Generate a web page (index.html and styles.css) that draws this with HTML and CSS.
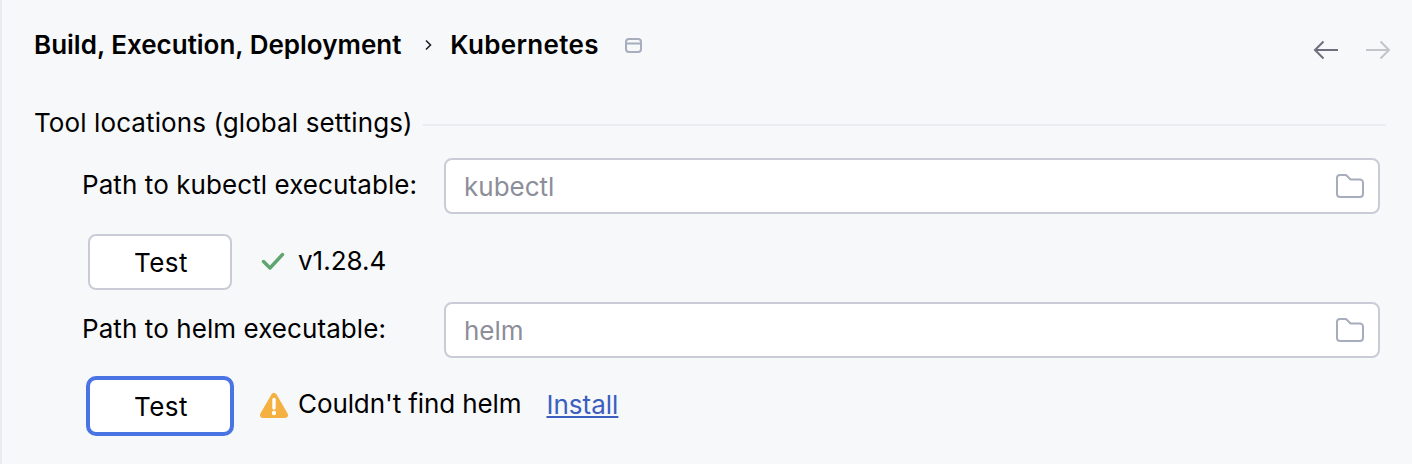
FILE: index.html
```html
<!DOCTYPE html>
<html lang="en">
<head>
<meta charset="utf-8">
<title>Kubernetes</title>
<link rel="stylesheet" href="styles.css">
</head>
<body>
<main class="panel">
  <header class="crumbs">
    <span class="crumb">Build, Execution, Deployment</span>
    <svg class="sep" width="10" height="14" viewBox="0 0 10 14"><path d="M3 2.500 7.500 7 3 11.500" fill="none" stroke="#1f2024" stroke-width="1.600"/></svg>
    <span class="crumb wide">Kubernetes</span>
    <svg class="win" width="20" height="16" viewBox="0 0 20 16"><rect x="2" y="2" width="15" height="13" rx="3" fill="none" stroke="#a8adbd" stroke-width="2"/><path d="M2 6.500h15" stroke="#a8adbd" stroke-width="2"/></svg>
    <nav class="nav">
      <svg width="26" height="22" viewBox="0 0 26 22"><path d="M25 11H2M10.500 2.500 2 11l8.500 8.500" fill="none" stroke="#6c707e" stroke-width="2"/></svg>
      <svg width="26" height="22" viewBox="0 0 26 22"><path d="M1 11h23M15.500 2.500 24 11l-8.500 8.500" fill="none" stroke="#c4c5c9" stroke-width="2"/></svg>
    </nav>
  </header>
  <div class="section"><span class="title">Tool locations (global settings)</span><i class="rule"></i></div>
  <div class="form">
    <div class="row">
      <label class="label">Path to kubectl executable:</label>
      <div class="field"><span class="hint">kubectl</span>
        <svg class="folder" width="30" height="26" viewBox="0 0 30 26"><path d="M2 5a3 3 0 0 1 3-3h6l4.500 4.500H25a3 3 0 0 1 3 3V21a3 3 0 0 1-3 3H5a3 3 0 0 1-3-3z" fill="none" stroke="#a8adbd" stroke-width="2"/></svg>
      </div>
    </div>
    <div class="status">
      <button class="btn">Test</button>
      <svg class="icon" width="26" height="22" viewBox="0 0 26 22"><path d="M3.500 10.500 10 17 22.500 3.500" fill="none" stroke="#5fa56f" stroke-width="3.400" stroke-linecap="round" stroke-linejoin="round"/></svg>
      <span class="msg">v1.28.4</span>
    </div>
    <div class="row">
      <label class="label">Path to helm executable:</label>
      <div class="field"><span class="hint">helm</span>
        <svg class="folder" width="30" height="26" viewBox="0 0 30 26"><path d="M2 5a3 3 0 0 1 3-3h6l4.500 4.500H25a3 3 0 0 1 3 3V21a3 3 0 0 1-3 3H5a3 3 0 0 1-3-3z" fill="none" stroke="#a8adbd" stroke-width="2"/></svg>
      </div>
    </div>
    <div class="status">
      <button class="btn focus">Test</button>
      <svg class="icon warn" width="30" height="28" viewBox="0 0 30 28"><path d="M15 4 26 23H4z" fill="#f5b042" stroke="#f5b042" stroke-width="6" stroke-linejoin="round"/><path d="M15 7.500v8.500" stroke="#fff" stroke-width="3.400" stroke-linecap="round"/><circle cx="15" cy="21" r="2.200" fill="#fff"/></svg>
      <span class="msg tight">Couldn't find helm</span>
      <a class="link" href="#">Install</a>
    </div>
  </div>
</main>
</body>
</html>
```
FILE: styles.css
```css
* { box-sizing: border-box; }
html, body { margin: 0; height: 100%; }
body {
  background: #f7f8fa;
  color: #000;
  font-family: Inter, "Liberation Sans", sans-serif;
  font-size: 26px;
  line-height: 32px;
  overflow: hidden;
}
.panel {
  height: 464px;
  border-left: 2px solid #ebecf0;
  padding: 29px 26px 0 32px;
}
.crumbs { display: flex; align-items: center; height: 32px; }
.crumb { font-weight: 600; }
.crumb.wide { letter-spacing: 0.3px; }
.sep { margin: 0 17px 0 22px; }
.win { margin-left: 25px; }
.nav { margin-left: auto; display: flex; gap: 26px; margin-top: 10px; margin-right: -5px; }
.section {
  display: flex;
  align-items: center;
  gap: 10px;
  margin-top: 45px;
  height: 32px;
}
.title { letter-spacing: 0.1px; margin-top: 2px; }
.rule { flex: 1; height: 2px; background: #ebecf0; margin-top: 5px; }
.form { padding-left: 48px; margin-right: 6px; margin-top: 20px; }
.row { display: flex; align-items: center; height: 56px; }
.label { width: 362px; flex: none; margin-top: -2px; letter-spacing: 0.08px; }
.field {
  flex: 1;
  height: 56px;
  background: #fff;
  border: 2px solid #c9ccd6;
  border-radius: 8px;
  display: flex;
  align-items: center;
  justify-content: space-between;
  padding: 0 14px 0 18px;
}
.hint { color: #8c8e9a; padding-top: 2px; }
.folder { margin-right: -1px; }
.status { display: flex; align-items: center; height: 56px; margin: 20px 0 12px; padding-left: 6px; }
.status:last-child { margin-top: 20px; }
.btn {
  width: 144px;
  height: 56px;
  background: #fff;
  border: 2px solid #c9ccd6;
  border-radius: 8px;
  font: inherit;
  letter-spacing: 0.5px;
  color: #000;
  padding: 2px 0 0 2px;
  margin-right: 28px;
}
.btn.focus {
  width: 148px;
  height: 60px;
  margin: 0 25px 0 -2px;
  border: 4px solid #4a74e3;
  border-radius: 10px;
}
.icon { flex: none; margin-right: 12px; }
.icon.warn { margin-right: 9px; }
.msg { margin-top: -2px; }
.msg.tight { letter-spacing: -0.1px; margin-top: -4px; }
.link { color: #3a5fc0; margin: -2px 0 0 25px; text-decoration: underline; }
```
